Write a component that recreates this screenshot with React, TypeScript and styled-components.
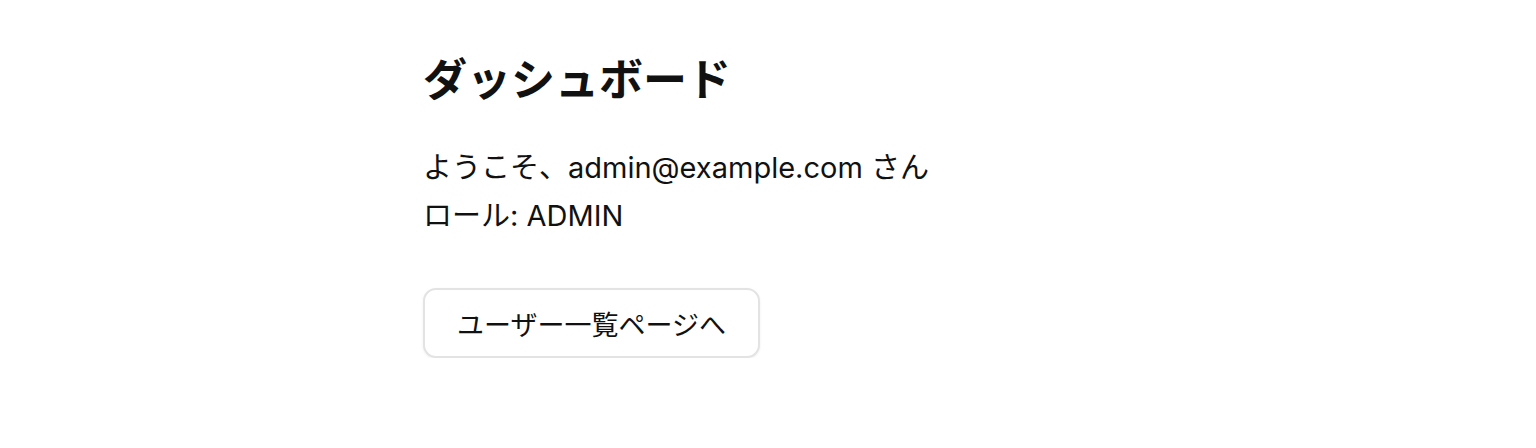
import React from "react";
import styled, { createGlobalStyle } from "styled-components";

const Global = createGlobalStyle`
  html, body { margin: 0; padding: 0; background: #ffffff; }
  body {
    font-family: Inter, "Noto Sans CJK JP", sans-serif;
    color: #111111;
  }
`;

const Page = styled.main`
  display: flex;
  flex-direction: column;
  align-items: flex-start;
  padding: 49px 0 0 423px;
`;

const Title = styled.h1`
  margin: 0;
  font-size: 44px;
  line-height: 62px;
  font-weight: 700;
  color: #111111;
`;

const Info = styled.div`
  margin-top: 33px;
  display: flex;
  flex-direction: column;
`;

const Line = styled.p`
  margin: 0;
  font-size: 29px;
  line-height: 48px;
`;

const Button = styled.button`
  margin-top: 48px;
  width: 337px;
  height: 70px;
  border: 2px solid #e3e3e3;
  border-radius: 13px;
  background: #ffffff;
  box-shadow: 0 1px 3px rgba(0, 0, 0, 0.06);
  font-family: inherit;
  font-size: 27px;
  color: #111111;
  cursor: pointer;
`;

export default function App() {
  return (
    <>
      <Global />
      <Page>
        <Title>ダッシュボード</Title>
        <Info>
          <Line>ようこそ、admin@example.com さん</Line>
          <Line>ロール: ADMIN</Line>
        </Info>
        <Button>ユーザー一覧ページへ</Button>
      </Page>
    </>
  );
}
